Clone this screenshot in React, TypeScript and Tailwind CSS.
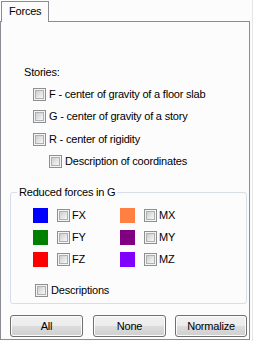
import React from 'react';

function CheckBox() {
  return (
    <span className="flex h-[13px] w-[13px] shrink-0 items-center justify-center border border-[#8e8f8f] bg-[#f4f4f4]">
      <span className="h-[9px] w-[9px] border border-[#aeb0b3] bg-[linear-gradient(135deg,#cbcdd0_0%,#e4e5e6_55%,#f6f6f6_100%)]" />
    </span>
  );
}

function CheckRow({ label, indent, h }: { label: string; indent: string; h: string }) {
  return (
    <div className={`flex items-center gap-[3px] ${indent} ${h}`}>
      <CheckBox />
      <span>{label}</span>
    </div>
  );
}

function ForceItem({ color, label }: { color: string; label: string }) {
  return (
    <div className="flex h-[22px] items-center">
      <span className={`h-[15px] w-[15px] ${color}`} />
      <span className="ml-[9px]">
        <CheckBox />
      </span>
      <span className="ml-[2px]">{label}</span>
    </div>
  );
}

function WinButton({ label, w }: { label: string; w: string }) {
  return (
    <button
      className={`flex h-[22px] ${w} items-center justify-center rounded-[3px] border border-[#707070] bg-[linear-gradient(to_bottom,#f2f2f2_0%,#ebebeb_50%,#dddddd_50%,#cfcfcf_100%)] shadow-[inset_0_0_0_1px_#fcfcfc]`}
    >
      {label}
    </button>
  );
}

export default function App() {
  return (
    <div className="h-[341px] w-[253px] border-r border-[#e6e6e6] bg-[#fcfcfc] font-['Liberation_Sans',Arial,sans-serif] text-[11px] tracking-[-0.2px] text-black">
      {/* Tab strip */}
      <div className="flex h-[21px] items-end pl-[1px]">
        <div className="relative z-10 -mb-px flex h-[21px] w-[48px] items-center border border-b-0 border-[#898c95] bg-[#fcfcfc] pl-[7px] pb-[1px]">
          Forces
        </div>
      </div>

      {/* Page */}
      <div className="h-[319px] w-[250px] border border-[#898c95] bg-[#fcfcfc]">
        <div className="mt-[42px] flex h-[16px] items-center pl-[23px]">Stories:</div>
        <div className="mt-[3px]">
          <CheckRow label="F - center of gravity of a floor slab" indent="pl-[32px]" h="h-[22px]" />
          <CheckRow label="G - center of gravity of a story" indent="pl-[32px]" h="h-[23px]" />
          <CheckRow label="R - center of rigidity" indent="pl-[32px]" h="h-[22px]" />
          <CheckRow label="Description of coordinates" indent="pl-[48px]" h="h-[23px]" />
        </div>

        {/* Group box */}
        <div className="relative ml-[9px] mt-[19px] h-[112px] w-[237px] rounded-[3px] border border-[#d5dfe5]">
          <span className="absolute left-[6px] top-[-8px] bg-[#fcfcfc] px-[2px] leading-[14px]">
            Reduced forces in G
          </span>
          <div className="mt-[11px] grid grid-cols-[87px_1fr] pl-[22px]">
            <ForceItem color="bg-[#0000ff]" label="FX" />
            <ForceItem color="bg-[#ff8040]" label="MX" />
            <ForceItem color="bg-[#008000]" label="FY" />
            <ForceItem color="bg-[#800080]" label="MY" />
            <ForceItem color="bg-[#ff0000]" label="FZ" />
            <ForceItem color="bg-[#8000ff]" label="MZ" />
          </div>
          <div className="mt-[12px] flex h-[16px] items-center gap-[3px] pl-[24px]">
            <CheckBox />
            <span>Descriptions</span>
          </div>
        </div>

        {/* Buttons */}
        <div className="ml-[9px] mt-[11px] flex">
          <WinButton label="All" w="w-[73px]" />
          <span className="w-[10px]" />
          <WinButton label="None" w="w-[73px]" />
          <span className="w-[9px]" />
          <WinButton label="Normalize" w="w-[72px]" />
        </div>
      </div>
    </div>
  );
}
